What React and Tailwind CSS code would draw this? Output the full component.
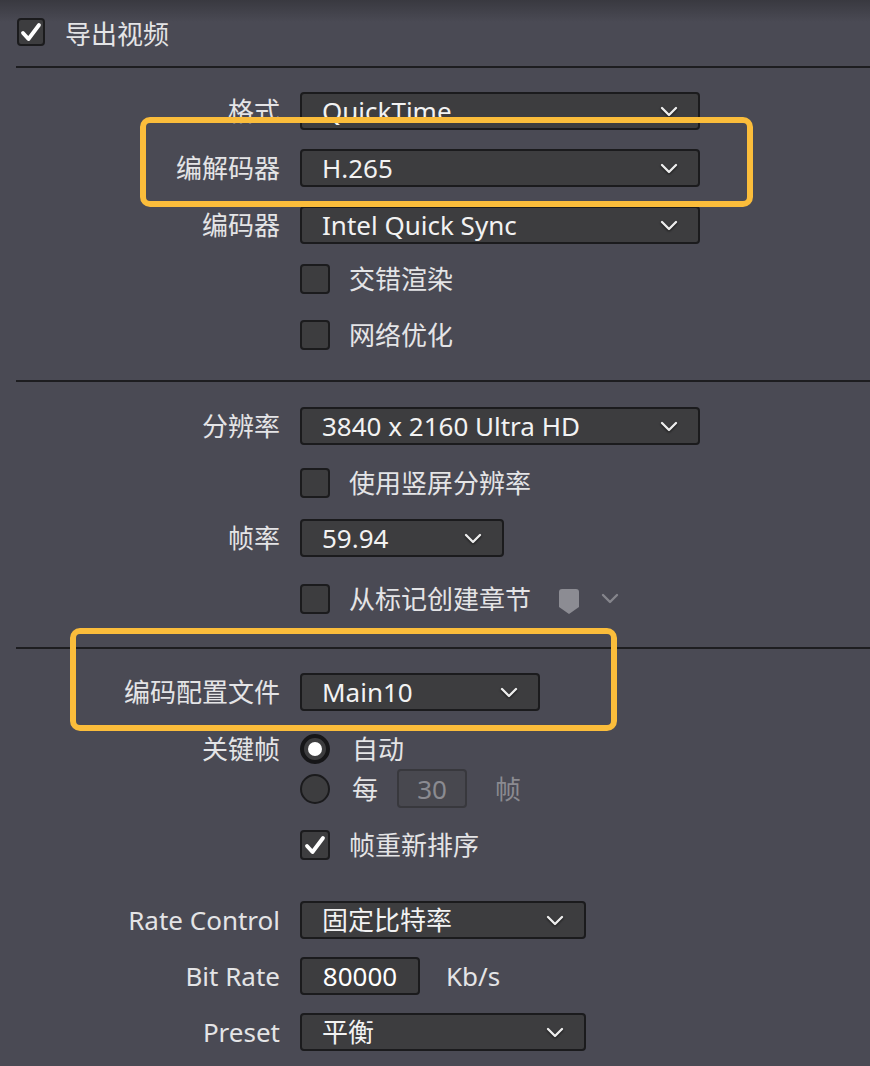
import React from "react";

function Chevron({ className = "text-[#ececec] drop-shadow-[0_1px_1px_rgba(0,0,0,0.7)]" }) {
  return (
    <svg width="18" height="11" viewBox="0 0 18 11" className={className}>
      <path
        d="M2 2l7 7 7-7"
        fill="none"
        stroke="currentColor"
        strokeWidth="2.4"
        strokeLinecap="round"
        strokeLinejoin="round"
      />
    </svg>
  );
}

function Select({ value, className }) {
  return (
    <div
      className={`flex h-[38px] items-center justify-between rounded-[4px] border-2 border-[#1b1b1d] bg-[#3d3d3f] pl-[20px] pr-[20px] text-[#f2f2f2] ${className}`}
    >
      <span className="leading-none">{value}</span>
      <Chevron />
    </div>
  );
}

function Box({ checked, size = "h-[30px] w-[30px]" }) {
  return (
    <div
      className={`flex shrink-0 items-center justify-center rounded-[4px] border-2 border-[#1b1b1d] bg-[#3d3d3f] ${size}`}
    >
      {checked && (
        <svg width="22" height="20" viewBox="0 0 22 20">
          <path
            d="M3 11l5.5 6L19 3"
            fill="none"
            stroke="white"
            strokeWidth="3.8"
            strokeLinecap="round"
            strokeLinejoin="round"
          />
        </svg>
      )}
    </div>
  );
}

function Radio({ on }) {
  return (
    <div
      className={`flex h-[30px] w-[30px] shrink-0 items-center justify-center rounded-full bg-[#3d3d3f] ${
        on ? "border-[4px] border-[#161618]" : "border-2 border-[#1b1b1d]"
      }`}
    >
      {on && <div className="h-[14px] w-[14px] rounded-full bg-white" />}
    </div>
  );
}

function Row({ label, mt, children }) {
  return (
    <div className={`flex items-center gap-[20px] ${mt}`}>
      <div className="w-[280px] text-right leading-none text-[#e4e4e6]">{label}</div>
      {children}
    </div>
  );
}

function CheckRow({ mt, label, checked, children }) {
  return (
    <div className={`flex items-center pl-[300px] ${mt}`}>
      <Box checked={checked} />
      <span className="ml-[19px] leading-none text-[#e4e4e6]">{label}</span>
      {children}
    </div>
  );
}

function Divider({ mt }) {
  return <div className={`ml-[16px] h-[2px] bg-[#1d1d20] ${mt}`} />;
}

export default function App() {
  return (
    <div className="relative min-h-[1066px] w-full overflow-hidden bg-[linear-gradient(to_bottom,#393940_0px,#4a4a54_22px)] font-['Noto_Sans','Noto_Sans_CJK_SC',sans-serif] text-[26px] text-[#e4e4e6]">
      <div className="flex h-[46px] items-center gap-[20px] pl-[17px] pt-[18px]">
        <Box checked size="h-[28px] w-[28px]" />
        <span className="translate-y-[2px] leading-none">导出视频</span>
      </div>

      <Divider mt="mt-[20px]" />

      <Row label="格式" mt="mt-[24px]">
        <Select value="QuickTime" className="w-[400px]" />
      </Row>
      <Row label="编解码器" mt="mt-[19px]">
        <Select value="H.265" className="w-[400px]" />
      </Row>
      <Row label="编码器" mt="mt-[19px]">
        <Select value="Intel Quick Sync" className="w-[400px]" />
      </Row>
      <CheckRow label="交错渲染" mt="mt-[20px]" />
      <CheckRow label="网络优化" mt="mt-[26px]" />

      <Divider mt="mt-[30px]" />

      <Row label="分辨率" mt="mt-[25px]">
        <Select value="3840 x 2160 Ultra HD" className="w-[400px]" />
      </Row>
      <CheckRow label="使用竖屏分辨率" mt="mt-[23px]" />
      <Row label="帧率" mt="mt-[21px]">
        <Select value="59.94" className="w-[204px]" />
      </Row>
      <CheckRow label="从标记创建章节" mt="mt-[26px]">
        <svg width="20" height="25" viewBox="0 0 20 25" className="ml-[28px] mt-[6px] text-[#8c8c93]">
          <path d="M3 0H17a3 3 0 0 1 3 3V18L10 25L0 18V3a3 3 0 0 1 3-3Z" fill="currentColor" />
        </svg>
        <span className="ml-[22px]">
          <Chevron className="text-[#85858c]" />
        </span>
      </CheckRow>

      <Divider mt="mt-[33px]" />

      <Row label="编码配置文件" mt="mt-[24px]">
        <Select value="Main10" className="w-[240px]" />
      </Row>
      <Row label="关键帧" mt="mt-[23px]">
        <Radio on />
        <span className="ml-[2px] leading-none">自动</span>
      </Row>
      <div className="mt-[5px] flex h-[39px] items-center pl-[300px]">
        <Radio />
        <span className="ml-[22px] leading-none">每</span>
        <div className="ml-[19px] flex h-[39px] w-[70px] items-center justify-center rounded-[4px] border-2 border-[#38383d] bg-[#48484f] leading-none text-[#8b8b91]">
          30
        </div>
        <span className="ml-[28px] leading-none text-[#8b8b91]">帧</span>
      </div>
      <CheckRow label="帧重新排序" checked mt="mt-[22px]" />

      <Row label="Rate Control" mt="mt-[41px]">
        <Select value="固定比特率" className="w-[286px]" />
      </Row>
      <Row label="Bit Rate" mt="mt-[18px]">
        <div className="flex h-[38px] w-[120px] items-center justify-center rounded-[4px] border-2 border-[#1b1b1d] bg-[#3d3d3f] leading-none text-white">
          80000
        </div>
        <span className="ml-[6px] leading-none">Kb/s</span>
      </Row>
      <Row label="Preset" mt="mt-[18px]">
        <Select value="平衡" className="w-[286px]" />
      </Row>

      <div className="pointer-events-none absolute left-[140px] top-[117px] h-[90px] w-[613px] rounded-[10px] border-[6px] border-[#fbbd3b]" />
      <div className="pointer-events-none absolute left-[70px] top-[628px] h-[103px] w-[547px] rounded-[10px] border-[6px] border-[#fbbd3b]" />
    </div>
  );
}
